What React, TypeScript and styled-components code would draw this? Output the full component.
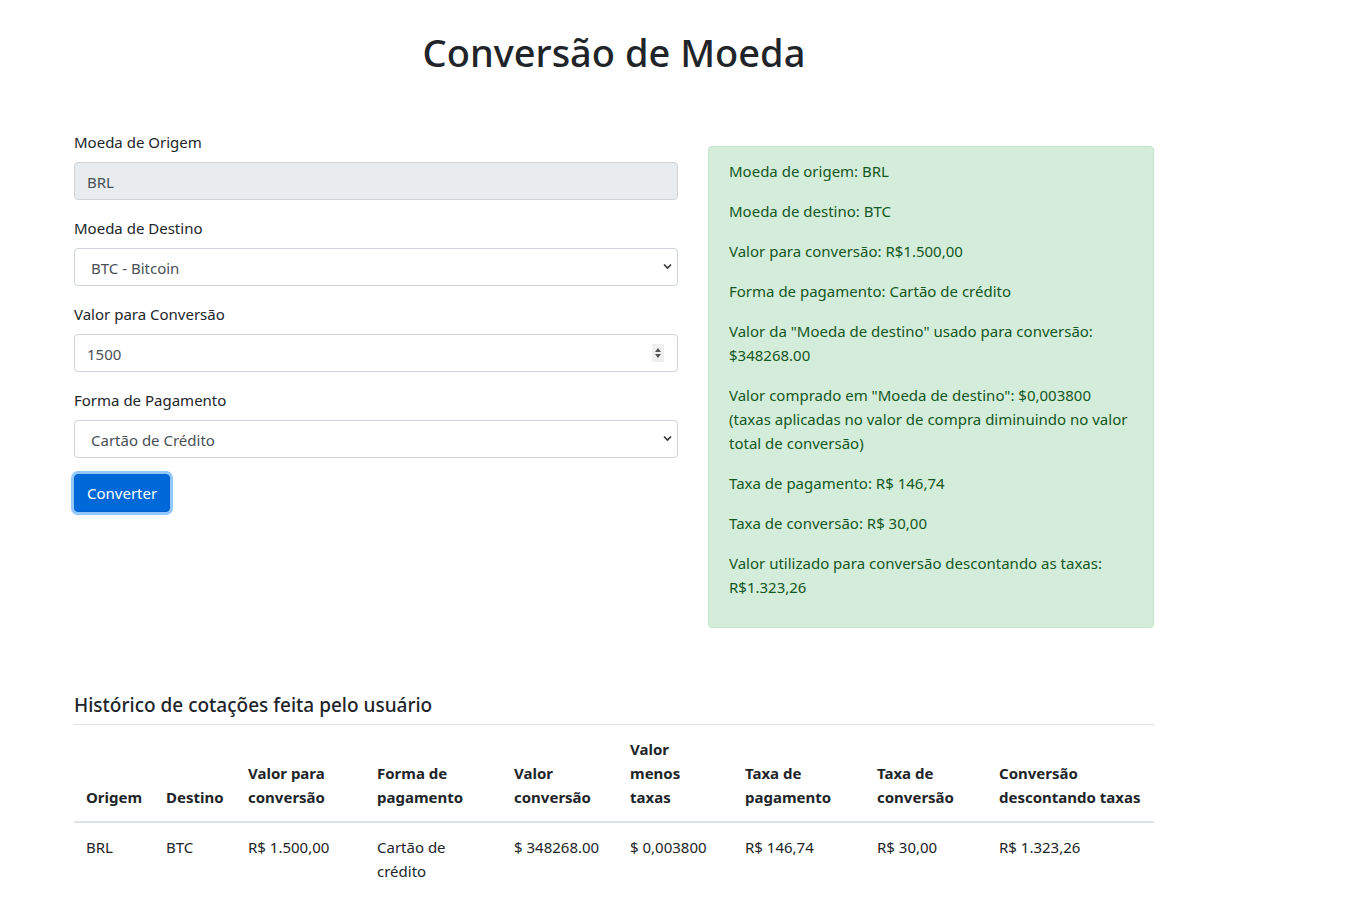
import React from "react";
import styled, { createGlobalStyle } from "styled-components";

const FONT = `"Noto Sans", "Open Sans", "Liberation Sans", sans-serif`;

const Global = createGlobalStyle`
  html, body { margin: 0; padding: 0; background: #fff; }
  body { font-family: ${FONT}; font-size: 15px; color: #212529; line-height: 24px; }
  * { box-sizing: border-box; }
`;

const Page = styled.div`
  width: 1080px;
  margin-left: 74px;
  padding-top: 28px;
  padding-bottom: 24px;
`;

const Title = styled.h1`
  margin: 0;
  text-align: center;
  font-size: 38px;
  font-weight: 500;
  line-height: 48px;
  color: #212529;
`;

const Top = styled.div`
  display: flex;
  gap: 30px;
  margin-top: 54px;
  align-items: flex-start;
`;

const Form = styled.form`
  width: 604px;
  display: flex;
  flex-direction: column;
`;

const Group = styled.div`
  display: flex;
  flex-direction: column;
  margin-bottom: 16px;
`;

const Label = styled.label`
  line-height: 24px;
  margin-bottom: 8px;
`;

const Field = styled.div`
  position: relative;
  height: 38px;
`;

const Input = styled.input<{ $disabled?: boolean }>`
  width: 100%;
  height: 38px;
  padding: 7px 12px 5px 12px;
  border: 1px solid #ced4da;
  border-radius: 4px;
  font-family: ${FONT};
  font-size: 15px;
  color: #495057;
  background: ${(p) => (p.$disabled ? "#e9ecef" : "#fff")};
  appearance: textfield;
  -moz-appearance: textfield;
  outline: none;
  &::-webkit-inner-spin-button,
  &::-webkit-outer-spin-button { -webkit-appearance: none; margin: 0; }
`;

const Select = styled.select`
  width: 100%;
  height: 38px;
  padding: 7px 28px 5px 16px;
  border: 1px solid #ced4da;
  border-radius: 4px;
  font-family: ${FONT};
  font-size: 15px;
  color: #495057;
  background: #fff;
  appearance: none;
  -webkit-appearance: none;
  outline: none;
`;

const Chevron = styled.svg`
  position: absolute;
  right: 6px;
  top: 15px;
  width: 9px;
  height: 7px;
  pointer-events: none;
`;

const Spinner = styled.div`
  position: absolute;
  right: 14px;
  top: 10px;
  width: 12px;
  height: 18px;
  background: #efefef;
  display: flex;
  align-items: center;
  justify-content: center;
  pointer-events: none;
`;

const Button = styled.button`
  align-self: flex-start;
  height: 38px;
  padding: 6px 12px;
  font-family: ${FONT};
  font-size: 15px;
  line-height: 24px;
  color: #fff;
  background: #0069d9;
  border: 1px solid #0062cc;
  border-radius: 4px;
  box-shadow: 0 0 0 3px rgba(38, 143, 255, 0.5);
  cursor: pointer;
`;

const Alert = styled.div`
  width: 446px;
  margin-top: 16px;
  padding: 12px 20px 12px 20px;
  background: #d4edda;
  border: 1px solid #c3e6cb;
  border-radius: 4px;
  color: #155724;
`;

const Para = styled.p`
  margin: 0 0 16px 0;
  line-height: 24px;
`;

const History = styled.section`
  margin-top: 65px;
`;

const HistoryTitle = styled.h5`
  margin: 0;
  font-size: 19px;
  font-weight: 500;
  line-height: 24px;
  padding-bottom: 7px;
  border-bottom: 1px solid #dee2e6;
`;

const Table = styled.table`
  width: 100%;
  border-collapse: collapse;
  table-layout: fixed;
`;

const Th = styled.th`
  text-align: left;
  vertical-align: bottom;
  padding: 12px;
  font-weight: 700;
  font-size: 15px;
  line-height: 24px;
  border-bottom: 2px solid #dee2e6;
`;

const Td = styled.td`
  vertical-align: top;
  padding: 12px;
  font-size: 15px;
  line-height: 24px;
`;

const widths = [80, 82, 129, 137, 116, 115, 132, 122, 167];

const heads: React.ReactNode[] = [
  "Origem",
  "Destino",
  <>Valor para<br />conversão</>,
  <>Forma de<br />pagamento</>,
  <>Valor<br />conversão</>,
  <>Valor<br />menos<br />taxas</>,
  <>Taxa de<br />pagamento</>,
  <>Taxa de<br />conversão</>,
  <>Conversão<br />descontando taxas</>,
];

const row: React.ReactNode[] = [
  "BRL",
  "BTC",
  "R$ 1.500,00",
  <>Cartão de<br />crédito</>,
  "$ 348268.00",
  "$ 0,003800",
  "R$ 146,74",
  "R$ 30,00",
  "R$ 1.323,26",
];

const ChevronIcon = () => (
  <Chevron viewBox="0 0 9 7">
    <path d="M1 1.5 L4.5 5 L8 1.5" stroke="#333" strokeWidth="1.6" fill="none" />
  </Chevron>
);

export default function App() {
  return (
    <>
      <Global />
      <Page>
        <Title>Conversão de Moeda</Title>
        <Top>
          <Form onSubmit={(e) => e.preventDefault()}>
            <Group>
              <Label>Moeda de Origem</Label>
              <Field>
                <Input $disabled readOnly value="BRL" />
              </Field>
            </Group>
            <Group>
              <Label>Moeda de Destino</Label>
              <Field>
                <Select defaultValue="BTC">
                  <option value="BTC">BTC - Bitcoin</option>
                </Select>
                <ChevronIcon />
              </Field>
            </Group>
            <Group>
              <Label>Valor para Conversão</Label>
              <Field>
                <Input type="number" defaultValue={1500} />
                <Spinner>
                  <svg width="8" height="12" viewBox="0 0 8 12">
                    <path d="M4 1 L7 5 L1 5 Z" fill="#555" />
                    <path d="M4 11 L7 7 L1 7 Z" fill="#555" />
                  </svg>
                </Spinner>
              </Field>
            </Group>
            <Group>
              <Label>Forma de Pagamento</Label>
              <Field>
                <Select defaultValue="cc">
                  <option value="cc">Cartão de Crédito</option>
                </Select>
                <ChevronIcon />
              </Field>
            </Group>
            <Button type="submit">Converter</Button>
          </Form>
          <Alert>
            <Para>Moeda de origem: BRL</Para>
            <Para>Moeda de destino: BTC</Para>
            <Para>Valor para conversão: R$1.500,00</Para>
            <Para>Forma de pagamento: Cartão de crédito</Para>
            <Para>Valor da "Moeda de destino" usado para conversão: $348268.00</Para>
            <Para>
              Valor comprado em "Moeda de destino": $0,003800 (taxas aplicadas no valor de compra
              diminuindo no valor total de conversão)
            </Para>
            <Para>Taxa de pagamento: R$ 146,74</Para>
            <Para>Taxa de conversão: R$ 30,00</Para>
            <Para>Valor utilizado para conversão descontando as taxas: R$1.323,26</Para>
          </Alert>
        </Top>
        <History>
          <HistoryTitle>Histórico de cotações feita pelo usuário</HistoryTitle>
          <Table>
            <colgroup>
              {widths.map((w, i) => (
                <col key={i} style={{ width: w }} />
              ))}
            </colgroup>
            <thead>
              <tr>
                {heads.map((h, i) => (
                  <Th key={i}>{h}</Th>
                ))}
              </tr>
            </thead>
            <tbody>
              <tr>
                {row.map((c, i) => (
                  <Td key={i}>{c}</Td>
                ))}
              </tr>
            </tbody>
          </Table>
        </History>
      </Page>
    </>
  );
}
